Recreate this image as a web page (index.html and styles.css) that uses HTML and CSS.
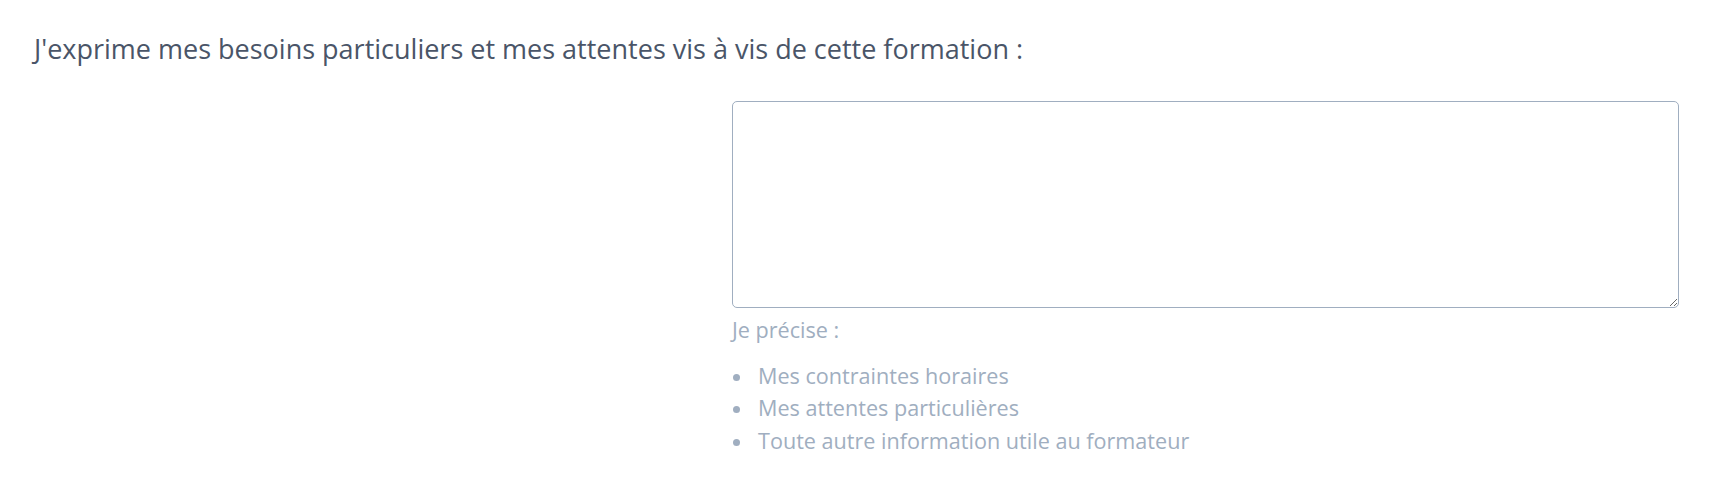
FILE: index.html
```html
<!DOCTYPE html>
<html>
<head>
    <meta charset="utf-8">
    <title>Besoins particuliers</title>
    <link rel="stylesheet" href="styles.css">
</head>
<body>
    <!-- Question : besoins et attentes -->
    <form class="form">
        <label class="field_label" for="besoins">J'exprime mes besoins particuliers et mes attentes vis à vis de cette formation :</label>
        <div class="field_row">
            <div class="field_spacer"></div>
            <div class="field_input">
                <textarea id="besoins" class="textbox"></textarea>
                <p class="hint">Je précise :</p>
                <ul class="hint_list">
                    <li>Mes contraintes horaires</li>
                    <li>Mes attentes particulières</li>
                    <li>Toute autre information utile au formateur</li>
                </ul>
            </div>
        </div>
    </form>
</body>
</html>
```

FILE: styles.css
```css
body, html {
    margin: 0;
    padding: 0;
    background: #ffffff;
    font-family: "Open Sans", "Liberation Sans", sans-serif;
}

.form {
    padding: 29px 31px 0 34px;
}

.field_label {
    display: block;
    font-size: 27px;
    line-height: 1.5;
    color: #4a5568;
}

.field_row {
    display: grid;
    grid-template-columns: 698px 1fr;
    margin-top: 31px;
}

.textbox {
    display: block;
    box-sizing: border-box;
    width: 100%;
    height: 207px;
    margin: 0;
    border: 1.4px solid #a0aec0;
    border-radius: 5px;
    background: #ffffff;
    font-family: inherit;
    font-size: 21.6px;
}

.hint {
    margin: 6px 0 0 0;
    font-size: 21.6px;
    line-height: 1.5;
    color: #a0aec0;
}

.hint_list {
    margin: 14px 0 0 0;
    padding: 0;
    list-style: none;
    font-size: 21.6px;
    line-height: 32.5px;
    color: #a0aec0;
}

/* petit point gris devant chaque ligne */
.hint_list li {
    display: flex;
    align-items: center;
}
.hint_list li::before {
    content: "";
    flex: none;
    width: 7px;
    height: 7px;
    margin: 2px 18px 0 1px;
    border-radius: 50%;
    background: #a0aec0;
}
```
